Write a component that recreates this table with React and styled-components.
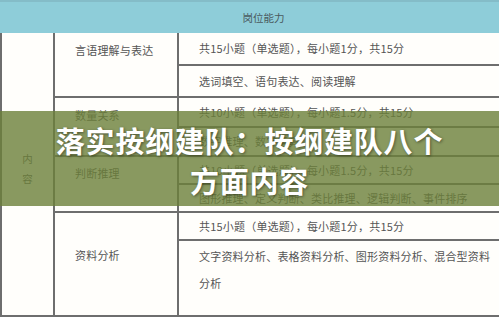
import React from "react";
import styled, { createGlobalStyle } from "styled-components";

const Global = createGlobalStyle`
  html, body { margin: 0; padding: 0; background: #ffffff; }
  body { font-family: "Noto Sans CJK SC", "Noto Sans", sans-serif; }
`;

const Page = styled.div`
  position: relative;
  width: 499px;
  height: 319px;
  overflow: hidden;
  background: #fff;
`;

const Header = styled.div`
  height: 31px;
  border-top: 2px solid #84bcc8;
  background: #8ecdd9;
  display: flex;
  align-items: center;
  justify-content: center;
  padding-left: 28px;
  font-size: 10.5px;
  color: #4a5a5e;
`;

const Table = styled.div`
  display: grid;
  grid-template-columns: 55px 124px 1fr;
  grid-template-rows: 33px 32px 30px 29px 28px 28px 28px 76px;
  width: 499px;
`;

const Cell = styled.div`
  box-sizing: border-box;
  border-bottom: 2px solid #6e6e6e;
  color: #555;
  font-size: 11px;
  letter-spacing: 0.2px;
  background: #fffefb;
`;

const SideCell = styled(Cell)`
  grid-column: 1;
  grid-row: 1 / span 8;
  border-left: 2px solid #6e6e6e;
  border-right: 2px solid #6e6e6e;
  display: flex;
  flex-direction: column;
  align-items: center;
  justify-content: center;
  padding-bottom: 10px;
  line-height: 20px;
  font-size: 10.5px;
`;

const TopicCell = styled(Cell)`
  grid-column: 2;
  grid-row: ${(p) => p.$row} / span ${(p) => p.$span};
  border-right: 2px solid #6e6e6e;
  padding: ${(p) => p.$top}px 0 0 20px;
  line-height: 20px;
`;

const DetailCell = styled(Cell)`
  grid-column: 3;
  grid-row: ${(p) => p.$row};
  padding: 0 2px 0 20px;
  display: flex;
  align-items: ${(p) => (p.$top ? "flex-start" : "center")};
  padding-top: ${(p) => (p.$top ? "2px" : "0")};
  line-height: 27px;
`;

const Keep = styled.span`
  white-space: nowrap;
`;

const Overlay = styled.div`
  position: absolute;
  left: 0;
  top: 111px;
  width: 499px;
  height: 95px;
  background: rgba(108, 128, 58, 0.8);
  display: flex;
  align-items: center;
  justify-content: center;
  text-align: center;
`;

const Title = styled.div`
  color: #fff;
  font-family: "Noto Sans CJK SC", sans-serif;
  font-weight: 700;
  font-size: 29px;
  letter-spacing: 0.8px;
  line-height: 40px;
  text-shadow: 1px 1px 3px rgba(0, 0, 0, 0.45);
  padding-top: 3px;
`;

const rows = [
  { t: "共15小题（单选题），每小题1分，共15分" },
  { t: "选词填空、语句表达、阅读理解" },
  { t: "共10小题（单选题），每小题1.5分，共15分" },
  { t: "数字推理、数学运算" },
  { t: "共10小题（单选题），每小题1.5分，共15分" },
  { t: "图形推理、定义判断、类比推理、逻辑判断、事件排序" },
  { t: "共15小题（单选题），每小题1分，共15分" },
  { t: "文字资料分析、表格资料分析、图形资料分析、混合型资料", tail: "分析", top: true },
];

const topics = [
  { name: "言语理解与表达", row: 1, span: 2, top: 7 },
  { name: "数量关系", row: 3, span: 2, top: 7 },
  { name: "判断推理", row: 5, span: 2, top: 6 },
  { name: "资料分析", row: 7, span: 2, top: 32 },
];

export default function App() {
  return (
    <Page>
      <Global />
      <Header>岗位能力</Header>
      <Table>
        <SideCell>
          <span>内</span>
          <span>容</span>
        </SideCell>
        {topics.map((tp) => (
          <TopicCell key={tp.name} $row={tp.row} $span={tp.span} $top={tp.top}>
            {tp.name}
          </TopicCell>
        ))}
        {rows.map((r, i) => (
          <DetailCell key={i} $row={i + 1} $top={r.top}>
            <span>
              {r.t}
              {r.tail && <Keep>{r.tail}</Keep>}
            </span>
          </DetailCell>
        ))}
      </Table>
      <Overlay>
        <Title>
          落实按纲建队：按纲建队八个
          <br />
          方面内容
        </Title>
      </Overlay>
    </Page>
  );
}
